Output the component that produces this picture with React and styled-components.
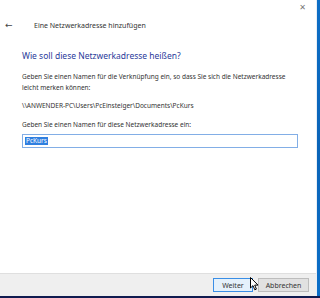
import React from "react";
import styled, { createGlobalStyle } from "styled-components";

const Global = createGlobalStyle`
  html, body { margin: 0; padding: 0; }
  body { width: 320px; height: 298px; overflow: hidden; font-family: "Noto Sans", "Open Sans", sans-serif; }
`;

const Screen = styled.div`
  width: 320px;
  height: 298px;
  display: flex;
  flex-direction: column;
  position: relative;
`;

const Main = styled.div`
  flex: 1;
  display: flex;
  min-height: 0;
`;

const Window = styled.div`
  width: 316px;
  display: flex;
  flex-direction: column;
  background: #ffffff;
  border-right: 1px solid #e8eef6;
`;

const Desktop = styled.div`
  flex: 1;
  background: linear-gradient(180deg, #0d6ec6 0%, #0a64b8 50%, #0b6fc8 100%);
`;

const Taskbar = styled.div`
  height: 2px;
  background: #101b4f;
`;

const TitleBar = styled.div`
  height: 16px;
  display: flex;
  justify-content: flex-end;
  align-items: center;
  padding: 0 10px 0 0;
`;

const CloseGlyph = styled.span`
  font-size: 8px;
  line-height: 1;
  color: #777;
  font-family: "DejaVu Sans", sans-serif;
`;

const NavRow = styled.div`
  height: 18px;
  display: flex;
  align-items: center;
  padding-left: 5px;
`;

const BackArrow = styled.span`
  width: 29px;
  font-size: 9px;
  color: #444;
  font-family: "DejaVu Sans", sans-serif;
`;

const NavTitle = styled.span`
  font-size: 7px;
  color: #333;
`;

const Content = styled.div`
  flex: 1;
  padding: 15px 18px 0 22px;
  display: flex;
  flex-direction: column;
`;

const Heading = styled.div`
  font-size: 8.5px;
  color: #2a3a9a;
  line-height: 14px;
  margin-bottom: 8px;
`;

const Text = styled.div`
  font-size: 6.5px;
  color: #333;
  line-height: 11px;
  white-space: nowrap;
  margin-bottom: ${(p) => p.$mb || 0}px;
`;

const InputBox = styled.div`
  height: 10px;
  border: 1px solid #82aee6;
  padding: 1px 2px;
  display: flex;
  align-items: center;
`;

const Selected = styled.span`
  background: #2f7fe0;
  color: #fff;
  font-size: 6.5px;
  line-height: 8px;
  padding: 0 1px;
`;

const Footer = styled.div`
  height: 22px;
  background: #efefef;
  border-top: 1px solid #dfdfdf;
  display: flex;
  justify-content: flex-end;
  align-items: center;
  gap: 5px;
  padding-right: 7px;
`;

const Button = styled.button`
  height: 14px;
  width: ${(p) => p.$w}px;
  padding: 0;
  font-family: inherit;
  font-size: 7px;
  color: #333;
  background: ${(p) => (p.$primary ? "#e5f1fb" : "#e1e1e1")};
  border: 1px solid ${(p) => (p.$primary ? "#3a8ee6" : "#bdbdbd")};
  display: flex;
  align-items: center;
  justify-content: center;
`;

const Cursor = styled.svg`
  position: absolute;
  left: 250px;
  top: 277px;
`;

export default function App() {
  return (
    <Screen>
      <Global />
      <Main>
        <Window>
          <TitleBar>
            <CloseGlyph>✕</CloseGlyph>
          </TitleBar>
          <NavRow>
            <BackArrow>←</BackArrow>
            <NavTitle>Eine Netzwerkadresse hinzufügen</NavTitle>
          </NavRow>
          <Content>
            <Heading>Wie soll diese Netzwerkadresse heißen?</Heading>
            <Text>Geben Sie einen Namen für die Verknüpfung ein, so dass Sie sich die Netzwerkadresse</Text>
            <Text $mb={7}>leicht merken können:</Text>
            <Text $mb={8}>\\ANWENDER-PC\Users\PcEinsteiger\Documents\PcKurs</Text>
            <Text $mb={4}>Geben Sie einen Namen für diese Netzwerkadresse ein:</Text>
            <InputBox>
              <Selected>PcKurs</Selected>
            </InputBox>
          </Content>
          <Footer>
            <Button $primary $w={40}>Weiter</Button>
            <Button $w={51}>Abbrechen</Button>
          </Footer>
        </Window>
        <Desktop />
      </Main>
      <Taskbar />
      <Cursor width="9" height="14" viewBox="0 0 9 14">
        <path d="M0.5 0.5 L0.5 11 L3 8.6 L4.8 12.8 L6.4 12.1 L4.7 8.1 L8 8.1 Z" fill="#fff" stroke="#000" strokeWidth="1" strokeLinejoin="round" />
      </Cursor>
    </Screen>
  );
}
